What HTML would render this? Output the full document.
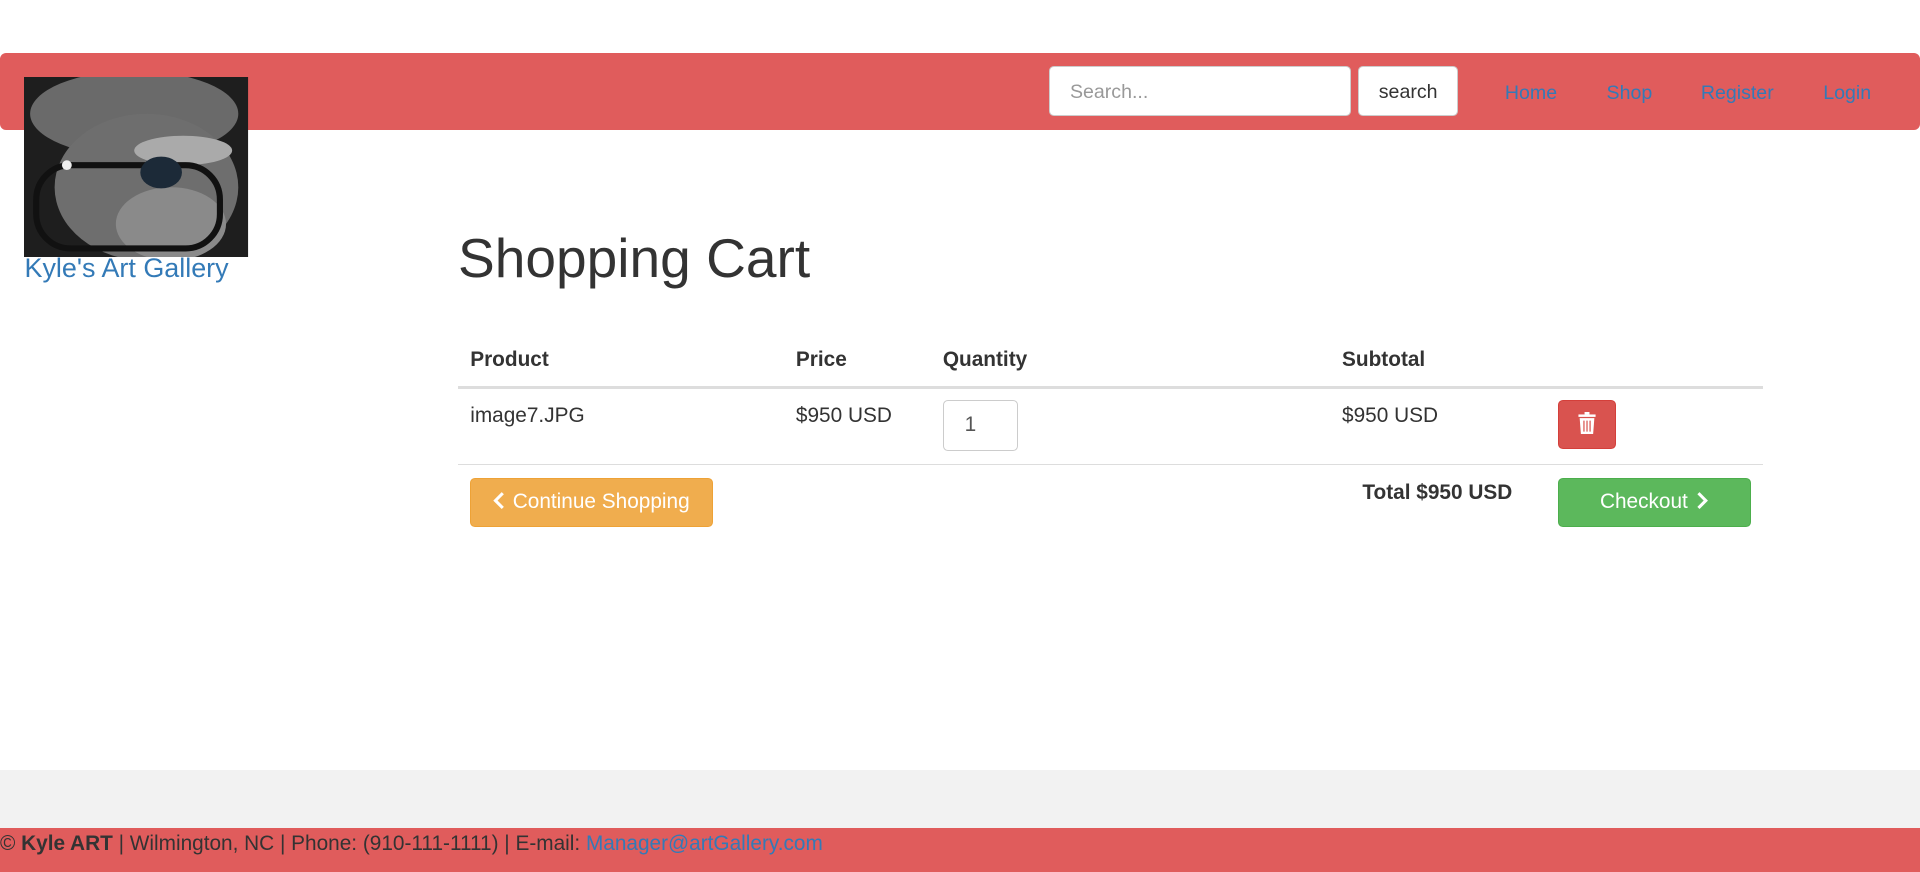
<!DOCTYPE html>
<html><head><meta charset="utf-8">
<style>
html,body{margin:0;padding:0;background:#fff;}
body{width:1568px;height:712px;zoom:1.22449;position:relative;overflow:hidden;font-family:"Liberation Sans",Arial,sans-serif;color:#333;font-size:17px;}
.abs{position:absolute;}
.nav{left:0;top:43px;width:1568px;height:63px;background:#e05c5c;border-radius:5px;}
.inp{left:857px;top:54px;width:246px;height:41px;background:#fff;border:1px solid #ccc;border-radius:4px;box-sizing:border-box;color:#999;padding:0 16px;line-height:41px;font-size:16px;}
.sbtn{left:1109px;top:54px;width:82px;height:41px;background:#fff;border:1px solid #ccc;border-radius:4px;box-sizing:border-box;text-align:center;line-height:41px;color:#333;font-size:16px;}
.nl{top:66px;color:#337ab7;font-size:16px;line-height:20px;}
.img{left:20px;top:63px;width:183px;height:147px;overflow:hidden;}
.brand{left:20px;top:207px;color:#337ab7;font-size:22px;}
h1{position:absolute;left:374px;top:183px;margin:0;font-weight:400;font-size:45px;line-height:56px;color:#333;}
.th{top:284px;font-weight:bold;font-size:17px;}
.td{top:330px;font-size:17px;}
.line{left:374px;width:1066px;background:#ddd;}
.btn{border-radius:4px;color:#fff;font-size:17px;text-align:center;box-sizing:border-box;}
.foot{left:0;top:629px;width:1568px;height:47px;background:#f2f2f2;}
.fbar{left:0;top:676px;width:1568px;height:36px;background:#e05c5c;font-size:17px;line-height:26px;color:#333;}
</style></head><body>
<div class="abs nav"></div>
<div class="abs inp">Search...</div>
<div class="abs sbtn">search</div>
<div class="abs nl" style="left:1229px">Home</div>
<div class="abs nl" style="left:1312px">Shop</div>
<div class="abs nl" style="left:1389px">Register</div>
<div class="abs nl" style="left:1489px">Login</div>
<div class="abs img">
<svg width="183" height="147" viewBox="0 0 183 147">
<rect width="183" height="147" fill="#1e1e1e"/>
<ellipse cx="90" cy="30" rx="85" ry="35" fill="#6a6a6a"/>
<ellipse cx="100" cy="90" rx="75" ry="60" fill="#6e6e6e"/>
<ellipse cx="120" cy="120" rx="45" ry="30" fill="#8a8a8a"/>
<ellipse cx="130" cy="60" rx="40" ry="12" fill="#aaa"/>
<rect x="10" y="72" width="150" height="68" rx="28" fill="none" stroke="#111" stroke-width="5"/>
<ellipse cx="112" cy="78" rx="17" ry="13" fill="#1c2a38"/>
<circle cx="35" cy="72" r="4" fill="#eee"/>
</svg></div>
<div class="abs brand">Kyle's Art Gallery</div>
<h1>Shopping Cart</h1>
<div class="abs th" style="left:384px">Product</div>
<div class="abs th" style="left:650px">Price</div>
<div class="abs th" style="left:770px">Quantity</div>
<div class="abs th" style="left:1096px">Subtotal</div>
<div class="abs line" style="top:315px;height:3px"></div>
<div class="abs td" style="left:384px">image7.JPG</div>
<div class="abs td" style="left:650px">$950 USD</div>
<div class="abs" style="left:770px;top:327px;width:61px;height:41px;border:1px solid #ccc;border-radius:4px;box-sizing:border-box;padding-left:17px;line-height:39px;color:#555">1</div>
<div class="abs td" style="left:1096px">$950 USD</div>
<div class="abs btn" style="left:1272px;top:327px;width:48px;height:40px;background:#d9534f;border:1px solid #d43f3a">
<svg width="18" height="20" viewBox="0 0 18 20" style="margin-top:9px"><rect x="2" y="2" width="14" height="2" fill="#fff"/><rect x="7" y="0" width="4" height="2" fill="#fff"/><path d="M3 5h12l-1 13H4z" fill="#fff"/><path d="M6.5 7v9M9 7v9M11.5 7v9" stroke="#d9534f" stroke-width="1"/></svg></div>
<div class="abs line" style="top:379px;height:1px"></div>
<div class="abs btn" style="left:384px;top:390px;width:198px;height:40px;background:#f0ad4e;border:1px solid #eea236;line-height:38px">
<svg width="10" height="14" viewBox="0 0 10 14" style="vertical-align:-1px;margin-right:6px"><path d="M8 1L2 7l6 6" fill="none" stroke="#fff" stroke-width="2.5"/></svg>Continue Shopping</div>
<div class="abs" style="left:1040px;width:195px;text-align:right;top:393px;font-weight:bold">Total $950 USD</div>
<div class="abs btn" style="left:1272px;top:390px;width:158px;height:40px;background:#5cb85c;border:1px solid #4cae4c;line-height:38px">Checkout<svg width="10" height="14" viewBox="0 0 10 14" style="vertical-align:-1px;margin-left:7px"><path d="M2 1l6 6-6 6" fill="none" stroke="#fff" stroke-width="2.5"/></svg></div>
<div class="abs foot"></div>
<div class="abs fbar">© <b>Kyle ART</b> | Wilmington, NC | Phone: (910-111-1111) | E-mail: <span style="color:#337ab7">Manager@artGallery.com</span></div>
</body></html>
